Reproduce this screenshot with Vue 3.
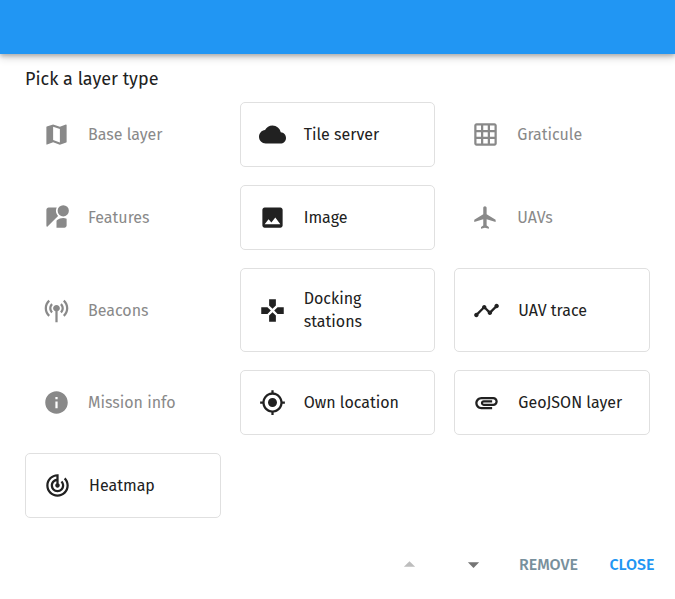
<script setup>
const layerTypes = [
  { label: 'Base layer', icon: 'map', disabled: true },
  { label: 'Tile server', icon: 'cloud' },
  { label: 'Graticule', icon: 'grid', disabled: true },
  { label: 'Features', icon: 'streetview', disabled: true },
  { label: 'Image', icon: 'image' },
  { label: 'UAVs', icon: 'flight', disabled: true },
  { label: 'Beacons', icon: 'antenna', disabled: true },
  { label: 'Docking stations', icon: 'gamepad' },
  { label: 'UAV trace', icon: 'timeline' },
  { label: 'Mission info', icon: 'info', disabled: true },
  { label: 'Own location', icon: 'location' },
  { label: 'GeoJSON layer', icon: 'attachment' },
  { label: 'Heatmap', icon: 'track' },
]

const icons = {
  map: 'M20.5 3l-.16.03L15 5.1 9 3 3.36 4.9c-.21.07-.36.25-.36.48V20.5c0 .28.22.5.5.5l.16-.03L9 18.9l6 2.1 5.64-1.9c.21-.07.36-.25.36-.48V3.5c0-.28-.22-.5-.5-.5zM15 19l-6-2.11V5l6 2.11V19z',
  cloud: 'M19.35 10.04C18.67 6.59 15.64 4 12 4 9.11 4 6.6 5.64 5.35 8.04 2.34 8.36 0 10.91 0 14c0 3.31 2.69 6 6 6h13c2.76 0 5-2.24 5-5 0-2.64-2.05-4.78-4.65-4.96z',
  grid: 'M20 2H4c-1.1 0-2 .9-2 2v16c0 1.1.9 2 2 2h16c1.1 0 2-.9 2-2V4c0-1.1-.9-2-2-2zM8 20H4v-4h4v4zm0-6H4v-4h4v4zm0-6H4V4h4v4zm6 12h-4v-4h4v4zm0-6h-4v-4h4v4zm0-6h-4V4h4v4zm6 12h-4v-4h4v4zm0-6h-4v-4h4v4zm0-6h-4V4h4v4z',
  streetview: 'M12.56 14.33c-.34.27-.56.7-.56 1.17V21h7c1.1 0 2-.9 2-2v-5.98c-.94-.33-1.95-.52-3-.52-2.03 0-3.93.7-5.44 1.83zM18 1a5 5 0 100 10 5 5 0 000-10zM11.5 6c0-1.08.27-2.1.74-3H5c-1.1 0-2 .9-2 2v14c0 .55.23 1.05.59 1.41l9.82-9.82C12.23 9.42 11.5 7.8 11.5 6z',
  image: 'M21 19V5c0-1.1-.9-2-2-2H5c-1.1 0-2 .9-2 2v14c0 1.1.9 2 2 2h14c1.1 0 2-.9 2-2zM8.5 13.5l2.5 3.01L14.5 12l4.5 6H5l3.5-4.5z',
  flight: 'M21 16v-2l-8-5V3.5c0-.83-.67-1.5-1.5-1.5S10 2.67 10 3.5V9l-8 5v2l8-2.5V19l-2 1.5V22l3.5-1 3.5 1v-1.5L13 19v-5.5l8 2.5z',
  antenna: 'M12 7c1.66 0 3 1.34 3 3 0 1.2-.8 2.3-2 2.75V22.5h-2v-9.75C9.8 12.3 9 11.2 9 10c0-1.66 1.34-3 3-3M16.53 14.46l-1.29-1.53C16 12.2 16.5 11.16 16.5 10s-.5-2.2-1.26-2.93l1.29-1.53C17.74 6.64 18.5 8.23 18.5 10s-.76 3.36-1.97 4.46M7.47 14.46l1.29-1.53C8 12.2 7.5 11.16 7.5 10s.5-2.2 1.26-2.93L7.47 5.54C6.26 6.64 5.5 8.23 5.5 10s.76 3.36 1.97 4.46M19.1 17.5l-1.29-1.53C19.47 14.49 20.5 12.37 20.5 10s-1.03-4.49-2.69-5.97l1.29-1.53c2.1 1.83 3.4 4.52 3.4 7.5s-1.3 5.67-3.4 7.5M4.9 17.5l1.29-1.53C4.53 14.49 3.5 12.37 3.5 10s1.03-4.49 2.69-5.97L4.9 2.5C2.8 4.33 1.5 7.02 1.5 10s1.3 5.67 3.4 7.5',
  gamepad: 'M15 7.5V2H9v5.5l3 3 3-3zM7.5 9H2v6h5.5l3-3-3-3zM9 16.5V22h6v-5.5l-3-3-3 3zM16.5 9l-3 3 3 3H22V9h-5.5z',
  timeline: 'M23 8c0 1.1-.9 2-2 2-.18 0-.35-.02-.51-.07l-3.56 3.55c.05.16.07.34.07.52 0 1.1-.9 2-2 2s-2-.9-2-2c0-.18.02-.36.07-.52l-2.55-2.55c-.16.05-.34.07-.52.07s-.36-.02-.52-.07l-4.55 4.56c.05.16.07.33.07.51 0 1.1-.9 2-2 2s-2-.9-2-2 .9-2 2-2c.18 0 .35.02.51.07l4.56-4.55C8.02 9.36 8 9.18 8 9c0-1.1.9-2 2-2s2 .9 2 2c0 .18-.02.36-.07.52l2.55 2.55c.16-.05.34-.07.52-.07s.36.02.52.07l3.55-3.56C19.02 8.35 19 8.18 19 8c0-1.1.9-2 2-2s2 .9 2 2z',
  info: 'M12 2C6.48 2 2 6.48 2 12s4.48 10 10 10 10-4.48 10-10S17.52 2 12 2zm1 15h-2v-6h2v6zm0-8h-2V7h2v2z',
  location: 'M12 8c-2.21 0-4 1.79-4 4s1.79 4 4 4 4-1.79 4-4-1.79-4-4-4zm8.94 3c-.46-4.17-3.77-7.48-7.94-7.94V1h-2v2.06C6.83 3.52 3.52 6.83 3.06 11H1v2h2.06c.46 4.17 3.77 7.48 7.94 7.94V23h2v-2.06c4.17-.46 7.48-3.77 7.94-7.94H23v-2h-2.06zM12 19c-3.87 0-7-3.13-7-7s3.13-7 7-7 7 3.13 7 7-3.13 7-7 7z',
  attachment: 'M2 12.5C2 9.46 4.46 7 7.5 7H18c2.21 0 4 1.79 4 4s-1.79 4-4 4H9.5C8.12 15 7 13.88 7 12.5S8.12 10 9.5 10H17v2H9.41c-.55 0-.55 1 0 1H18c1.1 0 2-.9 2-2s-.9-2-2-2H7.5C5.57 9 4 10.57 4 12.5S5.57 16 7.5 16H17v2H7.5C4.46 18 2 15.54 2 12.5z',
  track: 'M19.07 4.93l-1.41 1.41C19.1 7.79 20 9.79 20 12c0 4.42-3.58 8-8 8s-8-3.58-8-8c0-4.08 3.05-7.44 7-7.93v2.02C8.16 6.57 6 9.03 6 12c0 3.31 2.69 6 6 6s6-2.69 6-6c0-1.66-.67-3.16-1.76-4.24l-1.41 1.41C15.55 9.9 16 10.9 16 12c0 2.21-1.79 4-4 4s-4-1.79-4-4c0-1.86 1.28-3.41 3-3.86v2.14c-.6.35-1 .98-1 1.72 0 1.1.9 2 2 2s2-.9 2-2c0-.74-.4-1.38-1-1.72V2h-1C6.48 2 2 6.48 2 12s4.48 10 10 10 10-4.48 10-10c0-2.76-1.12-5.26-2.93-7.07z',
}
</script>

<template>
  <div class="dialog">
    <header class="app-bar"></header>
    <main class="content">
      <h1 class="title">Pick a layer type</h1>
      <div class="grid">
        <button
          v-for="type in layerTypes"
          :key="type.label"
          type="button"
          class="option"
          :disabled="type.disabled"
        >
          <svg class="icon" viewBox="0 0 24 24" aria-hidden="true"><path :d="icons[type.icon]" /></svg>
          <span>{{ type.label }}</span>
        </button>
      </div>
    </main>
    <footer class="actions">
      <button type="button" class="icon-button" aria-label="Move up" disabled>
        <svg class="icon" viewBox="0 0 24 24" aria-hidden="true"><path d="M7 14l5-5 5 5z" /></svg>
      </button>
      <button type="button" class="icon-button" aria-label="Move down">
        <svg class="icon" viewBox="0 0 24 24" aria-hidden="true"><path d="M7 10l5 5 5-5z" /></svg>
      </button>
      <button type="button" class="text-button">REMOVE</button>
      <button type="button" class="text-button primary">CLOSE</button>
    </footer>
  </div>
</template>

<style>
body {
  margin: 0;
  background: #fff;
}
</style>

<style scoped>
.dialog {
  font-family: "Fira Sans", Roboto, "Noto Sans", sans-serif;
  color: #212121;
}

.app-bar {
  height: 54px;
  background: #2196f3;
  box-shadow: 0 2px 4px rgba(0, 0, 0, 0.22), 0 4px 8px rgba(0, 0, 0, 0.16);
}

.content {
  padding: 13px 25px 19px;
}

.title {
  margin: 0 0 10px;
  font-size: 18px;
  font-weight: 400;
  line-height: 25px;
}

.grid {
  display: grid;
  grid-template-columns: repeat(3, 1fr);
  gap: 18px 19px;
}

button {
  font-family: inherit;
  background: none;
  cursor: pointer;
}

.option {
  display: flex;
  align-items: center;
  gap: 18px;
  min-height: 65px;
  padding: 18px;
  border: 1px solid #e0e0e0;
  border-radius: 5px;
  color: inherit;
  font-size: 16px;
  line-height: 23px;
  text-align: left;
}

.option:disabled {
  border: 0;
  color: #898989;
  cursor: default;
}

.icon {
  flex: none;
  display: block;
  width: 27px;
  height: 27px;
  fill: currentColor;
}

.actions {
  display: flex;
  align-items: center;
  justify-content: flex-end;
  gap: 9px;
  padding: 0 7px 7px;
}

.icon-button {
  padding: 14px;
  border: 0;
  border-radius: 50%;
  color: #757575;
}

.icon-button:disabled {
  color: #bdbdbd;
  cursor: default;
}

.text-button {
  min-width: 72px;
  padding: 8px 9px;
  border: 0;
  border-radius: 4px;
  color: #78909c;
  font-size: 16px;
  font-weight: 500;
  line-height: 24px;
}

.text-button.primary {
  color: #2196f3;
}
</style>
